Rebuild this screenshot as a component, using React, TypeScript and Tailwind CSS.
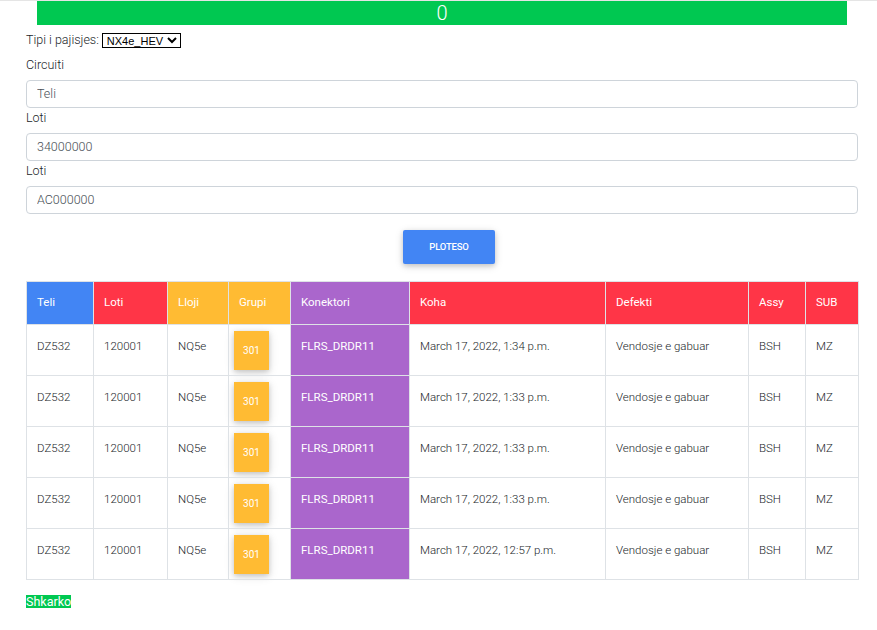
import React from "react";

const rows = [
    { koha: "March 17, 2022, 1:34 p.m." },
    { koha: "March 17, 2022, 1:33 p.m." },
    { koha: "March 17, 2022, 1:33 p.m." },
    { koha: "March 17, 2022, 1:33 p.m." },
    { koha: "March 17, 2022, 12:57 p.m." },
];

const td = "border border-[#dee2e6] px-[10px] pt-[13px] align-top";

function Field({ label, value }: { label: string; value: string }) {
    return (
        <div>
            <div className="mb-[7px] text-[12.5px] leading-[16px] text-[#212529]">{label}</div>
            <input
                type="text"
                defaultValue={value}
                className="block h-[28px] w-full rounded-[4px] border border-[#ced4da] bg-white px-[10px] text-[12.5px] text-[#495057] outline-none"
            />
        </div>
    );
}

export default function App() {
    return (
        <div className="border-t border-[#e5e5e5] bg-white pb-[20px] font-['Roboto',sans-serif] font-light">
            <div className="ml-[37px] mr-[30px] flex h-[24px] items-center justify-center bg-[#00c851] text-[20px] leading-none text-white">
                0
            </div>

            <div className="pl-[26px] pr-[19px]">
                <div className="mt-[6px] flex items-center gap-[3px] text-[12.5px] text-[#212529]">
                    <span>Tipi i pajisjes:</span>
                    <select
                        defaultValue="NX4e_HEV"
                        className="h-[15px] border border-black bg-white px-0 font-['Liberation_Sans',sans-serif] text-[11px] leading-none font-normal text-black"
                    >
                        <option>NX4e_HEV</option>
                    </select>
                </div>

                <div className="mt-[7px]">
                    <Field label="Circuiti" value="Teli" />
                </div>
                <div className="mt-[2px]">
                    <Field label="Loti" value="34000000" />
                </div>
                <div className="mt-[2px]">
                    <Field label="Loti" value="AC000000" />
                </div>

                <div className="mt-[16px] flex justify-center">
                    <button className="ml-[14px] h-[34px] w-[92px] rounded-[2px] bg-[#4285f4] text-[9.5px] font-medium tracking-[-0.2px] text-white uppercase shadow-[0_2px_5px_0_rgba(0,0,0,0.16),0_2px_10px_0_rgba(0,0,0,0.12)]">
                        Ploteso
                    </button>
                </div>

                <table className="mt-[17px] w-full table-fixed border-collapse text-[11.5px] text-[#212529]">
                    <colgroup>
                        <col className="w-[67px]" />
                        <col className="w-[74px]" />
                        <col className="w-[61px]" />
                        <col className="w-[62px]" />
                        <col className="w-[119px]" />
                        <col className="w-[196px]" />
                        <col className="w-[143px]" />
                        <col className="w-[57px]" />
                        <col className="w-[53px]" />
                    </colgroup>
                    <thead>
                        <tr className="h-[43px] text-left text-white">
                            <th className="border border-[#dee2e6] bg-[#4285f4] px-[10px] font-normal">Teli</th>
                            <th className="border border-[#dee2e6] bg-[#ff3547] px-[10px] font-normal">Loti</th>
                            <th className="border border-[#dee2e6] bg-[#ffbb33] px-[10px] font-normal">Lloji</th>
                            <th className="border border-[#dee2e6] bg-[#ffbb33] px-[10px] font-normal">Grupi</th>
                            <th className="border border-[#dee2e6] bg-[#aa66cc] px-[10px] font-normal">Konektori</th>
                            <th className="border border-[#dee2e6] bg-[#ff3547] px-[10px] font-normal">Koha</th>
                            <th className="border border-[#dee2e6] bg-[#ff3547] px-[10px] font-normal">Defekti</th>
                            <th className="border border-[#dee2e6] bg-[#ff3547] px-[10px] font-normal">Assy</th>
                            <th className="border border-[#dee2e6] bg-[#ff3547] px-[10px] font-normal">SUB</th>
                        </tr>
                    </thead>
                    <tbody>
                        {rows.map((r, i) => (
                            <tr key={i} className="h-[51px]">
                                <td className={td}>DZ532</td>
                                <td className={td}>120001</td>
                                <td className={td}>NQ5e</td>
                                <td className="border border-[#dee2e6] px-[5px] pt-[6px] align-top">
                                    <div className="flex h-[39px] w-[35px] items-center justify-center bg-[#ffbb33] text-[10px] font-normal text-white shadow-[0_2px_5px_0_rgba(0,0,0,0.16),0_2px_10px_0_rgba(0,0,0,0.12)]">
                                        301
                                    </div>
                                </td>
                                <td className={`${td} bg-[#aa66cc] font-normal text-white`}>FLRS_DRDR11</td>
                                <td className={td}>{r.koha}</td>
                                <td className={td}>Vendosje e gabuar</td>
                                <td className={td}>BSH</td>
                                <td className={td}>MZ</td>
                            </tr>
                        ))}
                    </tbody>
                </table>

                <div className="mt-[15px] w-fit bg-[#00c851] text-[12.5px] leading-[13px] font-normal text-white">
                    Shkarko
                </div>
            </div>
        </div>
    );
}
